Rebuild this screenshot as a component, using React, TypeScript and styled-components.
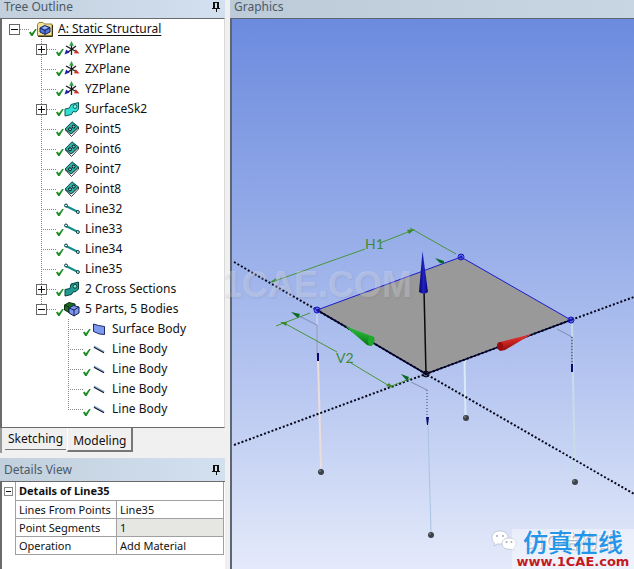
import React from "react";
import styled, { createGlobalStyle } from "styled-components";

const GlobalStyle = createGlobalStyle`
  * { box-sizing: border-box; }
  body {
    margin: 0;
    background: #f0f0f0;
    color: #111;
    font: 12px/18px "Noto Sans", "Noto Sans CJK SC", sans-serif;
  }
  button { font: inherit; color: inherit; }
`;

const Page = styled.div`
  position: relative;
  display: grid;
  grid-template-columns: 225px minmax(0, 1fr);
  column-gap: 5px;
  min-height: 100vh;
  overflow: hidden;
`;

const Sidebar = styled.aside`
  display: flex;
  flex-direction: column;
`;

const PanelHeader = styled.header<{ $tall?: boolean }>`
  display: flex;
  align-items: center;
  justify-content: space-between;
  height: ${(p) => (p.$tall ? 23 : 18)}px;
  padding: ${(p) => (p.$tall ? "0 4px" : "0 4px 4px")};
  background: linear-gradient(to right, #c2cfdc, #d3e0f0);
`;

const PanelTitle = styled.h2`
  margin: 0;
  font-size: 12px;
  font-weight: 400;
  line-height: 14px;
  color: #4c5a68;
`;

const PinButton = styled.button`
  display: flex;
  padding: 0;
  border: 0;
  background: none;
`;

const TreePane = styled.nav`
  height: 410px;
  padding: 0 0 0 7px;
  border: solid #6a6a6a;
  border-width: 1px 1px 1px 2px;
  border-right-color: #d8d8d8;
  background: #fff;
`;

const TreeList = styled.ul<{ $nested?: boolean }>`
  margin: 0 0 0 ${(p) => (p.$nested ? 27 : 0)}px;
  padding: 0;
  list-style: none;
`;

const TreeRow = styled.div`
  display: flex;
  align-items: center;
  height: 20px;
`;

const dots = (dir: string) =>
  `repeating-linear-gradient(to ${dir}, #8a8a8a 0 1px, transparent 1px 2px)`;

const Branch = styled.span<{ $stem: number }>`
  display: flex;
  align-items: center;
  width: 20px;
  height: 20px;
  background:
    ${dots("bottom")} 5px 0 / 1px ${(p) => p.$stem}px no-repeat,
    ${dots("right")} 5px 10px / 15px 1px no-repeat;
`;

const Expander = styled.button`
  display: flex;
  width: 11px;
  height: 11px;
  padding: 0;
  border: 1px solid #666;
  background: #fff;
`;

const NodeLabel = styled.span<{ $active?: boolean }>`
  margin-left: 5px;
  white-space: nowrap;
  text-decoration: ${(p) => (p.$active ? "underline" : "none")};
  text-underline-offset: 2px;
`;

const Tabs = styled.div`
  display: flex;
  align-items: flex-start;
  gap: 1px;
  height: 25px;
  padding-left: 3px;
  border-left: 2px solid #999;
  background: #f0f0f0;
`;

const Tab = styled.button<{ $active?: boolean }>`
  height: ${(p) => (p.$active ? 24 : 22)}px;
  padding: ${(p) => (p.$active ? "4px 5px 0" : "0 3px")};
  border: solid #777;
  border-width: ${(p) => (p.$active ? "0 2px 2px 1px" : "0 0 1px 0")};
  border-left-color: #fff;
  background: #f0f0f0;
  line-height: 18px;
`;

const DetailsPane = styled.section`
  display: flex;
  flex: 1;
  flex-direction: column;
  margin-top: 5px;
`;

const DetailsBody = styled.div`
  display: flex;
  flex: 1;
  align-items: flex-start;
  border: solid #6a6a6a;
  border-width: 1px 0 0 2px;
  background: #fff;
`;

const Gutter = styled.div`
  display: flex;
  justify-content: center;
  width: 13px;
  padding-top: 5px;
`;

const SmallExpander = styled(Expander)`
  width: 9px;
  height: 9px;
  border-color: #888;
`;

const DetailsTable = styled.table`
  flex: 1;
  margin-right: 1px;
  border-collapse: collapse;
  font-size: 11px;
  line-height: 17px;
`;

const Caption = styled.th`
  height: 18px;
  padding: 0 3px;
  border: 1px solid #a0a0a0;
  border-top: 0;
  text-align: left;
  font-weight: 700;
`;

const Key = styled.th`
  width: 101px;
  height: 18px;
  padding: 0 3px;
  border: 1px solid #a0a0a0;
  text-align: left;
  font-weight: 400;
  white-space: nowrap;
`;

const Value = styled.td<{ $readOnly?: boolean }>`
  padding: 0 3px;
  border: 1px solid #a0a0a0;
  background: ${(p) => (p.$readOnly ? "#e6e6e3" : "#fff")};
`;

const Graphics = styled.main`
  display: flex;
  flex-direction: column;
`;

const GraphicsHeader = styled(PanelHeader)`
  background: linear-gradient(to right, #bdcad8, #c8d5e2);
`;

const Viewport = styled.div`
  flex: 1;
  border: solid #5f6672;
  border-width: 1px 0 0 2px;
  background: linear-gradient(#6c8bde, #94abe8 37%, #b6c6f0 66%, #e4eafa);
`;

const Scene = styled.svg`
  display: block;
  width: 100%;
  height: auto;
`;

const DimText = styled.text`
  font: 400 14px Lato, sans-serif;
  fill: #3f8a38;
`;

const Watermark = styled.div`
  position: absolute;
  inset: 0;
  display: flex;
  align-items: center;
  justify-content: center;
  pointer-events: none;
  font: 700 36px "Liberation Sans", Arial, sans-serif;
  color: rgba(255, 255, 255, 0.22);
  text-shadow: 1px 1px 2px rgba(110, 110, 130, 0.15);
`;

const Credit = styled.div`
  position: absolute;
  right: 18px;
  bottom: 16px;
  display: flex;
  align-items: center;
  gap: 8px;
  font-size: 19px;
  line-height: 24px;
  color: #fff;
  text-shadow: 1px 1px 1px #6d7280;
`;

const SiteBadge = styled.a`
  position: absolute;
  right: 0;
  bottom: 0;
  display: flex;
  flex-direction: column;
  align-items: center;
  width: 122px;
  height: 40px;
  background: rgba(255, 255, 255, 0.4);
  text-decoration: none;
`;

const BadgeName = styled.span`
  font: 500 25px/25px "Noto Sans CJK SC", sans-serif;
  color: #2496ea;
`;

const BadgeUrl = styled.span`
  font: 700 13px/15px "DejaVu Sans", sans-serif;
  color: #c41a22;
`;

const Pin = () => (
  <svg width="9" height="10" viewBox="0 0 9 10" shapeRendering="crispEdges">
    <path d="M1 0h6v6h1v1H5v3H4V7H0V6h1zM3 1v5h2V1z" fill="#111" fillRule="evenodd" />
  </svg>
);

const Sign = ({ open, size = 9 }: { open: boolean; size?: number }) => (
  <svg width={size} height={size} viewBox={`0 0 ${size} ${size}`} shapeRendering="crispEdges">
    <path d={`M1 ${(size - 1) / 2}h${size - 2}v1H1z`} fill="#111" />
    {!open && <path d="M4 1h1v7H4z" fill="#111" />}
  </svg>
);

const Check = () => (
  <svg width="8" height="20" viewBox="0 0 8 20">
    <path d="M0 13.500l1.600-.9 1.300 1.700L6.200 10h1.600L3.600 17H2.200z" fill="#1a8c22" />
  </svg>
);

type IconKind = "project" | "plane" | "sketch" | "section" | "point" | "line" | "parts" | "surface" | "edge";

const drawings: Record<IconKind, React.ReactNode> = {
  project: (
    <>
      <path d="M.5 14.500V3.500L2 1.500h4l1.500 1.500h7.500v11.500z" fill="#f3e29a" stroke="#8f7d32" />
      <path d="M1 15.500h14.500V4" fill="none" stroke="#3a3414" />
      <path d="M3 7l4.500-2.500L13 6.500v4.500l-5 2.500-5-2.500z" fill="#5577d4" stroke="#14235f" />
      <path d="M3 7l5 2.500L13 6.500M8 9.500V13" fill="none" stroke="#14235f" />
      <path d="M5 7l3-1.500 3 1-3 1.500z" fill="#a9c0ff" />
    </>
  ),
  plane: (
    <>
      <path d="M7.500 3v11M2 5l11 6M3.500 11.500L12 5" stroke="#1c1c1c" strokeWidth="1.300" fill="none" />
      <path d="M7.500 0l2.400 4.800H5.100z" fill="#35a04a" />
      <path d="M15.500 12.500l-5.500-.2 1.800-4z" fill="#d32a20" />
      <path d="M.5 13.500l1.700-5 3.300 3z" fill="#1d1db0" />
    </>
  ),
  sketch: (
    <>
      <path d="M1 8l4.500-1L7 3.500l7.500-2v6.500L12 11l-3-.5-1.500 3-6.500 1.500z" fill="#2fe0d2" stroke="#0a5c58" />
      <circle cx="11" cy="5.500" r="1.900" fill="#8ff5ee" stroke="#0a5c58" />
    </>
  ),
  section: (
    <>
      <path d="M1 8.500l5-1L7 3l7.500-2v7L12 10.500l-3 .5-1.500 2.500-6.500 1.500z" fill="#1d9a92" stroke="#07423f" />
      <circle cx="11" cy="5.300" r="1.900" fill="#8fe0d8" stroke="#07423f" />
    </>
  ),
  point: (
    <>
      <path d="M7.500 15.500L14.500 8V6L8 12.500 1.500 9z" fill="#fff" stroke="#222" strokeWidth=".9" />
      <path d="M8 .8L14.500 6 7 13 1 8z" fill="#2bb0a7" stroke="#134b49" />
      <circle cx="9.700" cy="5.600" r="1.500" fill="#5fd4cc" stroke="#111" />
      <circle cx="6" cy="8.300" r="1.500" fill="#5fd4cc" stroke="#111" />
    </>
  ),
  line: (
    <>
      <path d="M2 5l12 6" stroke="#108c8c" strokeWidth="2" />
      <circle cx="2" cy="4.500" r="1.500" fill="#bdeeee" stroke="#0a3c3c" />
      <circle cx="13.900" cy="11" r="1.500" fill="#bdeeee" stroke="#0a3c3c" />
    </>
  ),
  parts: (
    <>
      <path d="M.5 4L5 1.500l6 1.500v8l-5 1-5.500-3z" fill="#1c6b25" stroke="#0b2e10" />
      <path d="M.5 4L5 6v6" fill="none" stroke="#0b2e10" />
      <path d="M5 7l4.500-2.500L15 6v6l-5 3-5-3z" fill="#7f95f0" stroke="#14204f" />
      <path d="M5 7l5 2 5-3M10 9v6" fill="none" stroke="#14204f" />
    </>
  ),
  surface: <path d="M2.500 3l5 1.500 6 1v8l-5-.500-6-2.500z" fill="#7d9bf0" stroke="#1d2b66" />,
  edge: (
    <>
      <path d="M3 6l10 5.500" stroke="#10182c" strokeWidth="1.500" />
      <path d="M3 5l10 5.500" stroke="#8fb0d0" strokeWidth="1.200" />
    </>
  ),
};

const NodeIcon = ({ kind }: { kind: IconKind }) => (
  <svg width="16" height="16" viewBox="0 0 16 16">{drawings[kind]}</svg>
);

interface TreeNode {
  label: string;
  icon: IconKind;
  open?: boolean;
  children?: TreeNode[];
}

const leaf = (icon: IconKind, ...labels: string[]): TreeNode[] =>
  labels.map((label) => ({ icon, label }));

const tree: TreeNode[] = [
  {
    label: "A: Static Structural",
    icon: "project",
    open: true,
    children: [
      { label: "XYPlane", icon: "plane", open: false },
      ...leaf("plane", "ZXPlane", "YZPlane"),
      { label: "SurfaceSk2", icon: "sketch", open: false },
      ...leaf("point", "Point5", "Point6", "Point7", "Point8"),
      ...leaf("line", "Line32", "Line33", "Line34", "Line35"),
      { label: "2 Cross Sections", icon: "section", open: false },
      {
        label: "5 Parts, 5 Bodies",
        icon: "parts",
        open: true,
        children: [
          ...leaf("surface", "Surface Body"),
          ...leaf("edge", "Line Body", "Line Body", "Line Body", "Line Body"),
        ],
      },
    ],
  },
];

const Branches = ({ nodes, depth = 0 }: { nodes: TreeNode[]; depth?: number }) => (
  <TreeList $nested={depth > 0}>
    {nodes.map((node, i) => (
      <li key={i}>
        <TreeRow>
          <Branch $stem={depth === 0 ? 0 : i === nodes.length - 1 ? 10 : 20}>
            {node.open !== undefined && (
              <Expander aria-expanded={node.open} aria-label={node.label}>
                <Sign open={node.open} />
              </Expander>
            )}
          </Branch>
          <Check />
          <NodeIcon kind={node.icon} />
          <NodeLabel $active={depth === 0}>{node.label}</NodeLabel>
        </TreeRow>
        {node.children && <Branches nodes={node.children} depth={depth + 1} />}
      </li>
    ))}
  </TreeList>
);

const details = [
  { name: "Lines From Points", value: "Line35" },
  { name: "Point Segments", value: "1", readOnly: true },
  { name: "Operation", value: "Add Material" },
];

const Vertex = ({ x, y, color = "#1818c8" }: { x: number; y: number; color?: string }) => (
  <g stroke={color} fill="none">
    <circle cx={x} cy={y} r="3" />
    <path d={`M${x - 3} ${y - 2}l6 4m0-4l-6 4M${x} ${y - 3}v6`} />
  </g>
);

const Foot = ({ x, y }: { x: number; y: number }) => (
  <g>
    <circle cx={x} cy={y} r="3" fill="#3c4246" />
    <circle cx={x - 1} cy={y - 1} r="1" fill="#737b80" />
  </g>
);

const Model = () => (
  <Scene viewBox="232 19 402 550" role="img" aria-label="Plate on four legs">
    <defs>
      <linearGradient id="red" x1="0" y1="0" x2="0.3" y2="1">
        <stop offset="0.2" stopColor="#f03a34" />
        <stop offset="1" stopColor="#8c0808" />
      </linearGradient>
      <linearGradient id="green" x1="0.3" y1="0" x2="0" y2="1">
        <stop offset="0.2" stopColor="#22b432" />
        <stop offset="1" stopColor="#045a10" />
      </linearGradient>
      <linearGradient id="blue">
        <stop offset="0" stopColor="#050560" />
        <stop offset="0.5" stopColor="#2020c8" />
        <stop offset="1" stopColor="#080878" />
      </linearGradient>
    </defs>

    <g fill="none">
      <path d="M318 360L321 468" stroke="#ecdcdc" strokeWidth="2" />
      <path d="M317 314v42" stroke="#d9dff0" />
      <path d="M428 426L431 532" stroke="#a9c3e0" />
      <path d="M464.500 360L465.500 415" stroke="#d8eaf6" strokeWidth="2" />
      <path d="M572 324L575 479" stroke="#c8dce8" strokeWidth="2" />
      <path d="M295 314l22 11v31M557 329l15 8v27M411 382l16 8" stroke="#7f8db0" />
      <path d="M427 390v27M572 337v27" stroke="#333c70" strokeDasharray="1 2" />
    </g>

    <path d="M317 310L461 257 571 320 426 374z" fill="#999" />
    <path d="M426 374L317 310 461 257 571 320" fill="none" stroke="#1c1cc8" />
    <path d="M317 310L426 374 571 320" fill="none" stroke="#000038" strokeWidth="1.500" />

    <path
      d="M234 262L317 310M317 310L426 374L634 494M234 445L426 374L571 320L634 297"
      fill="none"
      stroke="#05051a"
      strokeWidth="2"
      strokeDasharray="2 2"
    />

    <g stroke="#4a943a" fill="none">
      <path d="M272 282L365 249M380 243L413 230M410 228L456 254" />
      <path d="M276 326L310 313M284 323L337 352M351 363L391 387M389 387L412 378" />
    </g>
    <g fill="#3a8a2c">
      <path d="M269 283l7-5 1 3zM415 229l-8 1 2 4zM280 322l7 0-1 4zM394 388l-5-5-3 3z" />
      <path d="M291 312l9 2-2 4zM435 258l9 3v3l-4-1zM401 374l8 3-2 4z" fill="#0b6a28" />
    </g>
    <DimText x="365" y="249">H1</DimText>
    <DimText x="336" y="363">V2</DimText>

    <path d="M426 374L424 290" stroke="#0a0a0a" strokeWidth="1.500" />
    <path d="M422.500 251L428 292q-4 3-9 0z" fill="url(#blue)" />
    <path d="M345 326l29 11q2 5-3 9l-4-1z" fill="url(#green)" />
    <ellipse cx="371" cy="341" rx="3" ry="5" fill="#1cac2a" />
    <path d="M532 334L500 342q-5 4 0 9l5-1z" fill="url(#red)" />
    <ellipse cx="500" cy="346" rx="3" ry="4" fill="#9c0c0c" />

    <path d="M317 353h2v8h-2zM571 364h2v8h-2zM426 417h3l-1 8h-1z" fill="#0a0a6e" />

    <Vertex x={317} y={310} />
    <Vertex x={461} y={257} />
    <Vertex x={571} y={320} />
    <Vertex x={426} y={374} color="#05051a" />
    <Foot x={321} y={472} />
    <Foot x={431} y={535} />
    <Foot x={466} y={418} />
    <Foot x={575} y={482} />
  </Scene>
);

const ChatLogo = () => (
  <svg width="26" height="24" viewBox="0 0 26 24">
    <path d="M9 2c5 0 8 3 8 6.500S14 15 9 15l-3 0-3 2 .5-3C1.500 12.500 1 10.500 1 8.500 1 5 4 2 9 2z" fill="#fff" stroke="#b9c0cf" strokeWidth=".8" />
    <path d="M18 9c4.500 0 7 2.700 7 5.600 0 2-1 3.600-2.500 4.700l.4 2.500-2.700-1.500H18c-4.500 0-7-2.600-7-5.700S13.500 9 18 9z" fill="#fff" stroke="#b9c0cf" strokeWidth=".8" />
    <g fill="#a3a9b6">
      <circle cx="6" cy="7" r="1" />
      <circle cx="12" cy="7" r="1" />
      <circle cx="15.500" cy="13" r="1" />
      <circle cx="20.500" cy="13" r="1" />
    </g>
  </svg>
);

export default function App() {
  return (
    <>
      <GlobalStyle />
      <Page>
        <Sidebar>
          <PanelHeader>
            <PanelTitle>Tree Outline</PanelTitle>
            <PinButton aria-label="Pin Tree Outline"><Pin /></PinButton>
          </PanelHeader>
          <TreePane>
            <Branches nodes={tree} />
          </TreePane>
          <Tabs role="tablist">
            <Tab role="tab" aria-selected={false}>Sketching</Tab>
            <Tab role="tab" aria-selected $active>Modeling</Tab>
          </Tabs>
          <DetailsPane>
            <PanelHeader $tall>
              <PanelTitle>Details View</PanelTitle>
              <PinButton aria-label="Pin Details View"><Pin /></PinButton>
            </PanelHeader>
            <DetailsBody>
              <Gutter>
                <SmallExpander aria-expanded aria-label="Details of Line35">
                  <Sign open size={7} />
                </SmallExpander>
              </Gutter>
              <DetailsTable>
                <thead>
                  <tr><Caption colSpan={2}>Details of Line35</Caption></tr>
                </thead>
                <tbody>
                  {details.map((d) => (
                    <tr key={d.name}>
                      <Key scope="row">{d.name}</Key>
                      <Value $readOnly={d.readOnly}>{d.value}</Value>
                    </tr>
                  ))}
                </tbody>
              </DetailsTable>
            </DetailsBody>
          </DetailsPane>
        </Sidebar>
        <Graphics>
          <GraphicsHeader>
            <PanelTitle>Graphics</PanelTitle>
          </GraphicsHeader>
          <Viewport>
            <Model />
          </Viewport>
        </Graphics>
        <Watermark>1CAE.COM</Watermark>
        <Credit>
          <ChatLogo />
          <span>STG结构部</span>
        </Credit>
        <SiteBadge href="#">
          <BadgeName>仿真在线</BadgeName>
          <BadgeUrl>www.1CAE.com</BadgeUrl>
        </SiteBadge>
      </Page>
    </>
  );
}
